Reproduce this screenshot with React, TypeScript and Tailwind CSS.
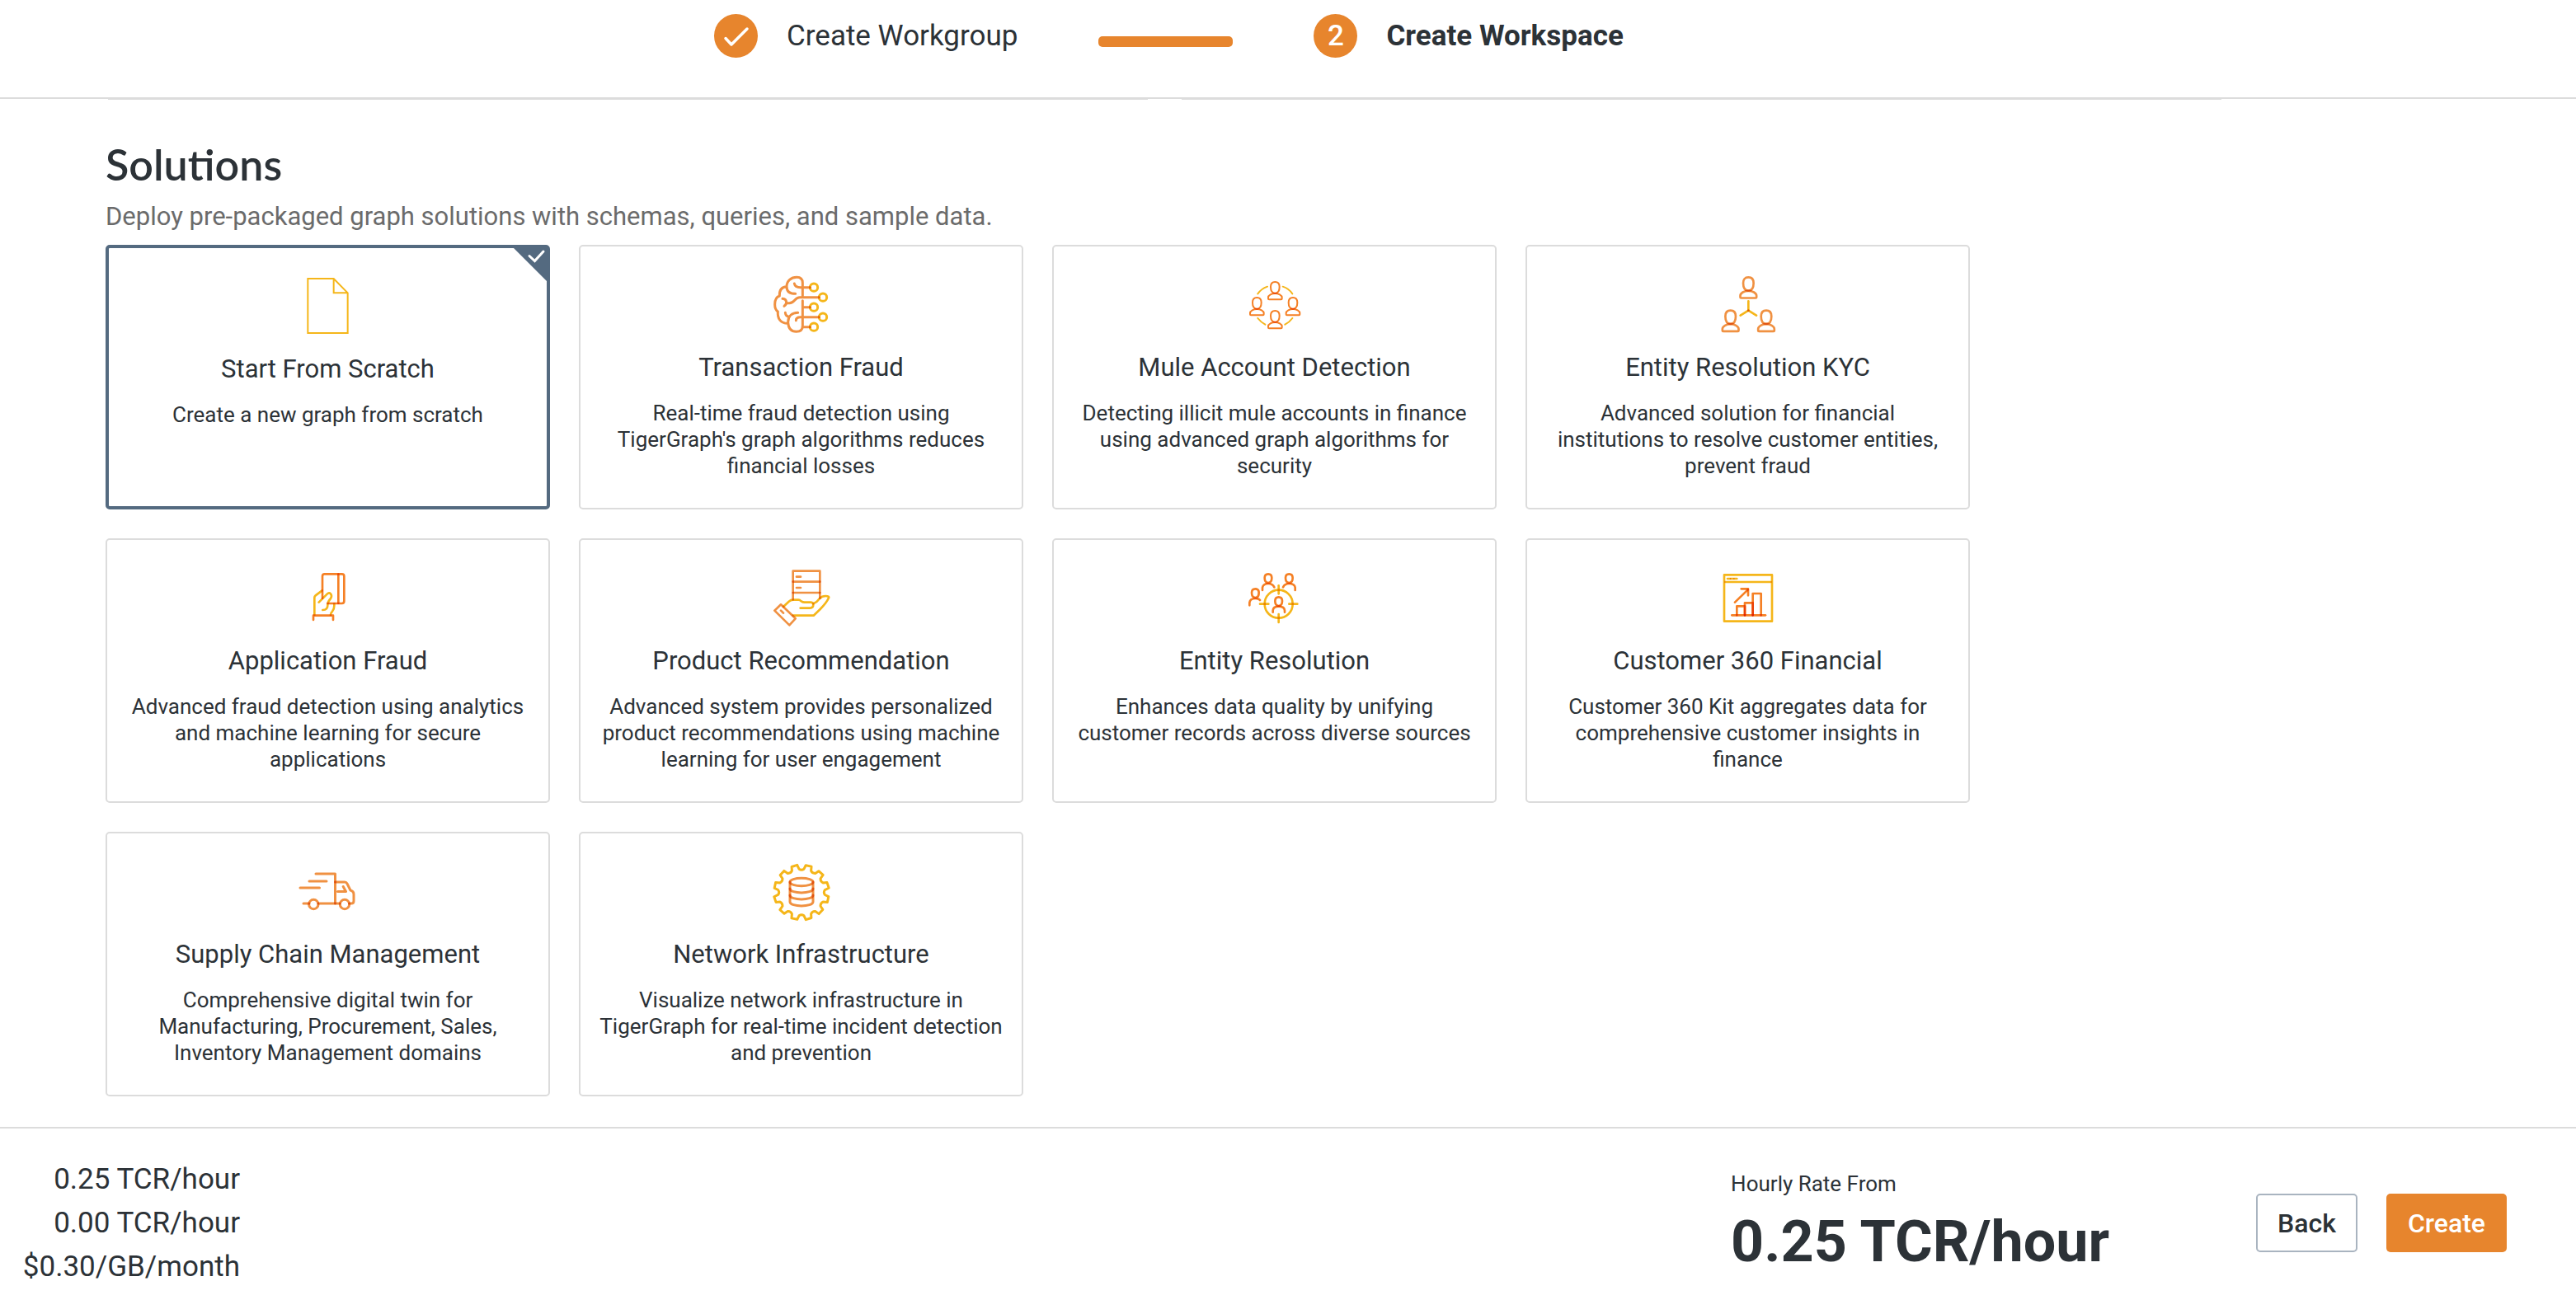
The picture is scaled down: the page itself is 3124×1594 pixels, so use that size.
import { useState } from "react";
import type { ReactNode } from "react";

const ORANGE = "#f09142";
const BRIGHT = "#f58025";
const YELLOW = "#f5b61a";

type StrokesProps = { color: string; width: number; paths: string[] };

/* Every stroke multiplies with the ones below it, so crossings turn darker. */
function Strokes({ color, width, paths }: StrokesProps) {
  return (
    <>
      {paths.map((d) => (
        <path
          key={d}
          d={d}
          className="mix-blend-multiply"
          stroke={color}
          strokeWidth={width}
          strokeLinecap="round"
          strokeLinejoin="round"
        />
      ))}
    </>
  );
}

function Icon({ viewBox, children }: { viewBox: string; children: ReactNode }) {
  return (
    <svg viewBox={viewBox} fill="none" className="isolate size-[72px] shrink-0" aria-hidden="true">
      {children}
    </svg>
  );
}

const bust = (x: number, y: number, s: number) => {
  const p = (dx: number, dy: number) => `${x + dx * s} ${y + dy * s}`;
  return [
    `M${p(0, 0)} C${p(11, 0)} ${p(16, 7)} ${p(16, 18)} C${p(16, 32)} ${p(11, 41)} ${p(0, 41)} C${p(-11, 41)} ${p(-16, 32)} ${p(-16, 18)} C${p(-16, 7)} ${p(-11, 0)} ${p(0, 0)} Z`,
    `M${p(-22, 64)} Q${p(-25, 64)} ${p(-25, 61)} V${y + 57 * s} C${p(-25, 48)} ${p(-12, 42)} ${p(0, 42)} C${p(12, 42)} ${p(25, 48)} ${p(25, 57)} V${y + 61 * s} Q${p(25, 64)} ${p(22, 64)} Z`,
  ];
};

const head = (x: number, y: number) =>
  `M${x} ${y} C${x + 9} ${y} ${x + 13} ${y + 6} ${x + 13} ${y + 14} C${x + 13} ${y + 25} ${x + 9} ${y + 32} ${x} ${y + 32} C${x - 9} ${y + 32} ${x - 13} ${y + 25} ${x - 13} ${y + 14} C${x - 13} ${y + 6} ${x - 9} ${y} ${x} ${y} Z`;

const ring = (x: number, y: number, r: number) =>
  `M${x - r} ${y} a${r} ${r} 0 1 0 ${2 * r} 0 a${r} ${r} 0 1 0 ${-2 * r} 0`;

const oval = (x: number, y: number, rx: number, ry: number) =>
  `M${x - rx} ${y} a${rx} ${ry} 0 1 0 ${2 * rx} 0 a${rx} ${ry} 0 1 0 ${-2 * rx} 0`;

const gear = (cx: number, cy: number, teeth: number) => {
  const pt = (r: number, deg: number) => {
    const a = (deg * Math.PI) / 180;
    return `${(cx + r * Math.sin(a)).toFixed(2)} ${(cy - r * Math.cos(a)).toFixed(2)}`;
  };
  const step = 360 / teeth;
  let d = "";
  for (let i = 0; i < teeth; i++) {
    const c = step / 2 + i * step;
    d += `${i === 0 ? "M" : "L"}${pt(28.5, c - 9)} L${pt(33.2, c - 6)} L${pt(33.6, c + 6)} L${pt(28.5, c + 9)} Q${pt(26.3, c + 15)} ${pt(28.5, c + 21)} `;
  }
  return d + "Z";
};

const FileIcon = () => (
  <Icon viewBox="64 138 216 216">
    <path d="M98 144 H192 L243 196 V342 H98 Z M192 144 V196 H243" stroke={YELLOW} strokeWidth={6} />
  </Icon>
);

const BrainIcon = () => (
  <Icon viewBox="106 42 216 216">
    <Strokes
      color={YELLOW}
      width={9}
      paths={[ring(259, 86, 14), ring(292, 122, 14), ring(259, 158, 14), ring(292, 194, 14), ring(259, 230, 14)]}
    />
    <path
      className="mix-blend-multiply"
      stroke={ORANGE}
      strokeWidth={9}
      strokeLinecap="round"
      strokeLinejoin="round"
      d="M218 116 V70 C218 56 210 49 197 49 C176 49 160 62 160 83 C160 100 170 109 192 109 M160 83 C142 84 133 96 134 117 C121 121 117 134 117 148 C117 160 120 169 128 174 C126 200 138 217 164 217 M218 134 V226 C218 240 209 247 195 247 C175 247 166 233 165 213 C165 192 178 178 201 178 M188 72 C190 82 198 86 210 86 H245 M145 127 C163 129 162 147 151 154 M160 143 H170 C190 143 188 122 208 122 H278 M218 158 H245 M194 206 C194 198 200 194 210 194 H278 M224 230 H245 M155 178 C156 188 162 192 170 193"
    />
  </Icon>
);

const MuleIcon = () => (
  <Icon viewBox="88 42 216 216">
    <Strokes
      color={YELLOW}
      width={6}
      paths={["M134 109 Q147 91 169 83", "M225 83 Q247 90 260 109", "M134 198 Q145 212 161 221", "M260 198 Q250 212 233 221"]}
    />
    <Strokes
      color={BRIGHT}
      width={6}
      paths={[...bust(197, 66, 1), ...bust(131, 123, 1), ...bust(262, 123, 1), ...bust(197, 171, 1)]}
    />
  </Icon>
);

const KycIcon = () => (
  <Icon viewBox="101 42 216 216">
    <Strokes color={ORANGE} width={8} paths={[...bust(210, 49, 1.18), ...bust(145, 170, 1.18), ...bust(275, 170, 1.18)]} />
    <Strokes color={YELLOW} width={8} paths={["M210 136 V170", "M210 170 L181 188", "M210 170 L239 188"]} />
  </Icon>
);

const CardHandIcon = () => (
  <Icon viewBox="94 30 216 216">
    <Strokes
      color={YELLOW}
      width={8}
      paths={[
        "M152 198 V135 Q152 130 156 127 L180 109",
        "M168 152 L198 122 Q205 115 211 121 Q217 129 211 138 Q200 150 200 160 Q201 180 182 180",
        "M224 157 V164 Q224 177 217 185 Q211 190 211 198",
      ]}
    />
    <Strokes
      color={BRIGHT}
      width={8}
      paths={["M181 137 V57 Q181 49 189 49 H252 Q260 49 260 57 V148 Q260 156 252 156 H200", "M239 50 V155", "M148 216 V200 H220 V216"]}
    />
  </Icon>
);

const ProductIcon = () => (
  <Icon viewBox="106 30 216 216">
    <Strokes
      color={YELLOW}
      width={8}
      paths={[
        "M148 168 L168 149 Q175 143 183 143 H203 Q208 143 213 148 Q219 152 225 152 H248 Q257 153 257 160 Q257 173 245 173 H210",
        "M257 157 Q272 150 280 138 Q288 129 302 129 Q316 129 313 136 Q305 154 282 177 L258 200 H183",
      ]}
    />
    <Strokes
      color={ORANGE}
      width={8}
      paths={["M183 142 V38 H281 V137", "M183 77 H281", "M183 117 H281", "M196 59 H211", "M196 99 H211", "M139 160 L192 211 L170 235 L116 182 Z", "M139 182 L148 191"]}
    />
  </Icon>
);

const TargetIcon = () => (
  <Icon viewBox="88 30 216 216">
    <Strokes
      color={YELLOW}
      width={8}
      paths={[ring(210, 158, 51), "M210 91 V121", "M210 195 V225", "M142 158 H173", "M248 158 H278"]}
    />
    <Strokes
      color={BRIGHT}
      width={8}
      paths={[
        head(210, 133),
        "M189 188 V182 Q190 167 210 167 Q231 167 232 182 V188",
        head(172, 49),
        "M151 108 V98 Q154 84 172 84 Q188 84 194 97",
        head(248, 49),
        "M226 97 Q232 84 248 84 Q268 84 270 98 V108",
        head(125, 103),
        "M104 163 V153 Q106 138 125 138 Q138 138 142 144",
      ]}
    />
  </Icon>
);

const ChartIcon = () => (
  <Icon viewBox="101 30 216 216">
    <Strokes color={YELLOW} width={8} paths={["M122 52 H296 V221 H122 Z", "M126 78 H292", "M134 66 H168"]} />
    <Strokes
      color={BRIGHT}
      width={8}
      paths={["M150 199 H272", "M168 199 V166 H197 V199", "M197 199 V154 H226 V199", "M226 199 V120 H256 V199", "M161 152 L208 106", "M184 103 H209 V127"]}
    />
    <Strokes color={BRIGHT} width={4} paths={["M144 66 h1", "M157 66 h1"]} />
  </Icon>
);

const TruckIcon = () => (
  <Icon viewBox="32 16 72 72">
    <Strokes
      color={ORANGE}
      width={3}
      paths={[
        "M53 30 H76.5 V66",
        "M45 39 H66",
        "M34 47 H57.5",
        "M38 66 H45",
        "M56 66 H82",
        ring(50.3, 67, 5.7),
        ring(88, 67, 5.7),
        "M76.5 40 H88 Q90 40 91 42 L95 50 Q99 51 99 55 V63 Q99 66 96 66 H93.5",
        "M86.2 45.5 L89.5 51.5 H79.5",
      ]}
    />
  </Icon>
);

const NetworkIcon = () => (
  <Icon viewBox="606 16 72 72">
    <Strokes color={YELLOW} width={3} paths={[gear(642, 52.5, 12)]} />
    <Strokes
      color={ORANGE}
      width={3}
      paths={[
        oval(642, 40, 14, 4.8),
        "M628 40 V64 C628 70.5 656 70.5 656 64 V40",
        "M628 48 C628 54.5 656 54.5 656 48",
        "M628 56 C628 62.5 656 62.5 656 56",
      ]}
    />
  </Icon>
);

const solutions: { title: string; text: string; icon: ReactNode }[] = [
  { title: "Start From Scratch", text: "Create a new graph from scratch", icon: <FileIcon /> },
  {
    title: "Transaction Fraud",
    text: "Real-time fraud detection using TigerGraph's graph algorithms reduces financial losses",
    icon: <BrainIcon />,
  },
  {
    title: "Mule Account Detection",
    text: "Detecting illicit mule accounts in finance using advanced graph algorithms for security",
    icon: <MuleIcon />,
  },
  {
    title: "Entity Resolution KYC",
    text: "Advanced solution for financial institutions to resolve customer entities, prevent fraud",
    icon: <KycIcon />,
  },
  {
    title: "Application Fraud",
    text: "Advanced fraud detection using analytics and machine learning for secure applications",
    icon: <CardHandIcon />,
  },
  {
    title: "Product Recommendation",
    text: "Advanced system provides personalized product recommendations using machine learning for user engagement",
    icon: <ProductIcon />,
  },
  {
    title: "Entity Resolution",
    text: "Enhances data quality by unifying customer records across diverse sources",
    icon: <TargetIcon />,
  },
  {
    title: "Customer 360 Financial",
    text: "Customer 360 Kit aggregates data for comprehensive customer insights in finance",
    icon: <ChartIcon />,
  },
  {
    title: "Supply Chain Management",
    text: "Comprehensive digital twin for Manufacturing, Procurement, Sales, Inventory Management domains",
    icon: <TruckIcon />,
  },
  {
    title: "Network Infrastructure",
    text: "Visualize network infrastructure in TigerGraph for real-time incident detection and prevention",
    icon: <NetworkIcon />,
  },
];

function SolutionCard({
  title,
  text,
  icon,
  selected,
  onSelect,
}: {
  title: string;
  text: string;
  icon: ReactNode;
  selected: boolean;
  onSelect: () => void;
}) {
  return (
    <button
      type="button"
      aria-pressed={selected}
      onClick={onSelect}
      className={
        selected
          ? "relative flex min-h-[321px] cursor-pointer flex-col items-center justify-start rounded-[5px] border-4 border-[#546a80] px-5 pt-[35px] text-center"
          : "relative flex min-h-[321px] cursor-pointer flex-col items-center justify-start rounded-[5px] border-2 border-[#dcdcdc] px-[22px] pt-[35px] text-center"
      }
    >
      {selected && (
        <svg viewBox="0 0 40 40" fill="none" className="absolute top-0 right-0 size-10" aria-hidden="true">
          <path d="M0 0 H40 V40 Z" fill="#546a80" />
          <path d="M19 9.5 L25.5 15.5 L36 4" stroke="#fff" strokeWidth={3} strokeLinecap="round" />
        </svg>
      )}
      {icon}
      <span className="mt-5 text-[31px] leading-[40px]">{title}</span>
      <span className="mt-[19px] text-[26px] leading-[32px]">{text}</span>
    </button>
  );
}

export default function App() {
  const [selected, setSelected] = useState(0);

  return (
    <div className="flex min-h-screen flex-col bg-white font-['Roboto',sans-serif] text-[#2c3237]">
      <header className="border-b-2 border-[#dcdcdc] pt-[17px] pb-12">
        <ol className="flex items-center pl-[866px] text-[35px] leading-[53px]">
          <li className="flex items-center gap-[35px]">
            <span className="flex size-[53px] items-center justify-center rounded-full bg-[#e7852d]">
              <svg viewBox="0 0 53 53" fill="none" className="size-[53px]" aria-hidden="true">
                <path d="M14 29.5 L21 37 L40 18" stroke="#fff" strokeWidth={3.5} strokeLinecap="round" strokeLinejoin="round" />
              </svg>
            </span>
            <span>Create Workgroup</span>
          </li>
          <li aria-hidden="true" className="mx-[98px] pt-[14px]">
            <div className="h-[13px] w-[163px] rounded-[5px] bg-[#e7852d]" />
          </li>
          <li aria-current="step" className="flex items-center gap-[35px]">
            <span className="flex size-[53px] items-center justify-center rounded-full bg-[#e7852d] text-[35px] font-medium text-white">
              2
            </span>
            <span className="font-bold">Create Workspace</span>
          </li>
        </ol>
      </header>

      <main className="flex-1 px-32">
        <div className="max-w-[2569px]">
          <div className="grid grid-cols-2 gap-[35px]">
            <div className="mx-[3px] h-px bg-[#dcdcdc]" />
            <div className="mx-[3px] h-px bg-[#dcdcdc]" />
          </div>
          <h2 className="mt-[46px] font-['Lato',sans-serif] text-[52px] leading-[64px] font-semibold">Solutions</h2>
          <p className="mt-3 text-[31px] leading-[40px] text-[#6b6b6b]">
            Deploy pre-packaged graph solutions with schemas, queries, and sample data.
          </p>
          <div className="mt-[14px] mb-[37px] grid grid-cols-[repeat(auto-fill,539px)] gap-[35px]">
            {solutions.map((s, i) => (
              <SolutionCard key={s.title} {...s} selected={i === selected} onSelect={() => setSelected(i)} />
            ))}
          </div>
        </div>
      </main>

      <footer className="flex items-center justify-between border-t-2 border-[#dcdcdc] pt-[35px] pr-[84px] pb-[31px]">
        <ul className="w-[291px] text-right text-[35px] leading-[53px] whitespace-nowrap">
          <li>0.25 TCR/hour</li>
          <li>0.00 TCR/hour</li>
          <li>$0.30/GB/month</li>
        </ul>
        <div className="flex items-center">
          <div className="mr-[178px]">
            <div className="text-[26px] leading-[32px]">Hourly Rate From</div>
            <div className="mt-3 text-[70px] leading-[84px] font-bold">0.25 TCR/hour</div>
          </div>
          <button type="button" className="h-[71px] cursor-pointer rounded-[5px] border-2 border-[#a9b4c0] px-6 text-[32px] font-medium">
            Back
          </button>
          <button type="button" className="ml-[35px] h-[71px] cursor-pointer rounded-[5px] bg-[#e7852d] px-[26px] text-[32px] font-medium text-white">
            Create
          </button>
        </div>
      </footer>
    </div>
  );
}
